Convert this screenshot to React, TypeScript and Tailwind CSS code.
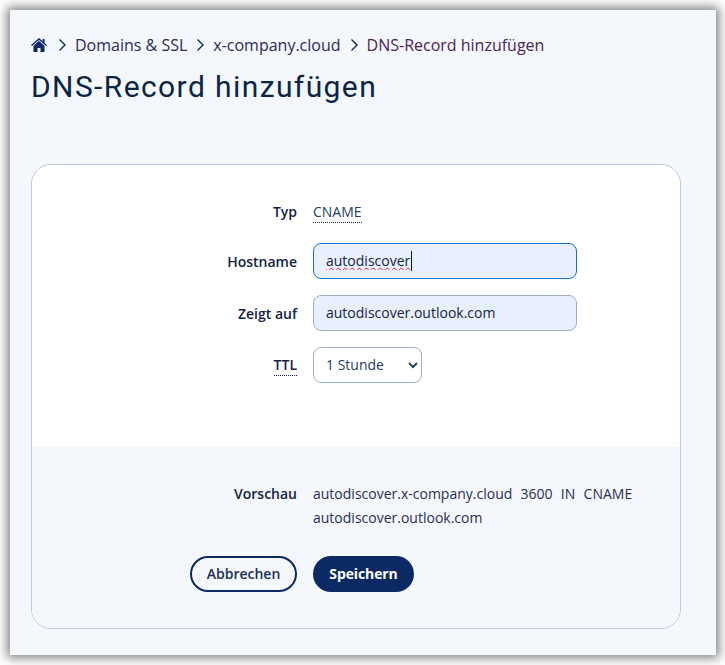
import React from 'react';

const Chevron = () => (
  <svg className="w-[9px] h-[14px] shrink-0" viewBox="0 0 9 14" fill="none" stroke="#0d2b5e" strokeWidth={1.4}>
    <path d="M1.5 1.5L7 7l-5.5 5.5" />
  </svg>
);

const HomeIcon = () => (
  <svg className="w-[16px] h-[14px] shrink-0" viewBox="0 0 16 14" fill="#0b2a63">
    <path d="M8 0L0 7l.9 1L8 1.9 15.1 8l.9-1-2.4-2.1V1h-2v2.2L8 0z" />
    <path d="M8 3L2.5 7.8V14h4v-4h3v4h4V7.8L8 3z" />
  </svg>
);

const Label = ({ children, dotted }: { children: React.ReactNode; dotted?: boolean }) => (
  <div className="flex justify-end">
    <span className={`text-[14px] font-semibold text-[#14233f] ${dotted ? 'border-b border-dotted border-[#14233f] leading-[20px]' : ''}`}>
      {children}
    </span>
  </div>
);

export default function App() {
  return (
    <div className="w-[725px] h-[665px] bg-white pt-[10px] pl-[10px] overflow-hidden font-['Open_Sans','Noto_Sans',sans-serif]">
      <div className="w-[706px] h-[645px] bg-[#f4f7fb] shadow-[0_0_10px_3px_rgba(0,0,0,0.5)] pl-[21px] pt-[25px]">
        {/* Breadcrumb */}
        <nav className="flex items-center h-[20px] text-[16px] text-[#2b2a5c]">
          <HomeIcon />
          <span className="ml-[11px]"><Chevron /></span>
          <span className="ml-[8px]">Domains &amp; SSL</span>
          <span className="ml-[9px]"><Chevron /></span>
          <span className="ml-[8px]">x-company.cloud</span>
          <span className="ml-[9px]"><Chevron /></span>
          <span className="ml-[8px] text-[#4a2552]">DNS-Record hinzufügen</span>
        </nav>

        <h1 className="mt-[14px] text-[30px] leading-[36px] font-normal tracking-[1.4px] text-[#0b2545] font-['Roboto',sans-serif]">
          DNS-Record hinzufügen
        </h1>

        {/* Card */}
        <div className="mt-[59px] w-[650px] h-[465px] rounded-[20px] border border-[#bccbd9] overflow-hidden flex flex-col">
          <div className="h-[282px] bg-white pt-[29px] grid grid-cols-[265px_264px] gap-x-[16px] content-start text-[14px] text-[#14233f]">
            <div className="pt-[7px] h-[36px]"><Label>Typ</Label></div>
            <div className="pt-[7px] h-[36px]">
              <span className="border-b border-dotted border-[#14233f] leading-[20px] text-[#27405f] inline-block">CNAME</span>
            </div>

            <div className="mt-[13px] h-[36px] flex items-center justify-end"><Label>Hostname</Label></div>
            <div className="mt-[13px] relative">
              <input
                readOnly
                defaultValue="autodiscover"
                spellCheck={false}
                className="w-[264px] h-[36px] rounded-[8px] border border-[#1273c4] bg-[#e8f0fd] pl-[12px] pr-[12px] pb-[1px] text-[14px] text-[#14233f] outline-none underline decoration-wavy decoration-[#f01d2c] decoration-1"
              />
              <span className="absolute left-[98px] top-[8px] w-px h-[20px] bg-[#111]" />
            </div>

            <div className="mt-[16px] h-[36px] flex items-center justify-end"><Label>Zeigt auf</Label></div>
            <div className="mt-[16px]">
              <input
                readOnly
                defaultValue="autodiscover.outlook.com"
                className="w-[264px] h-[36px] rounded-[8px] border border-[#9fadc4] bg-[#e8f0fd] pl-[12px] pr-[12px] pb-[1px] text-[14px] text-[#14233f] outline-none"
              />
            </div>

            <div className="mt-[16px] h-[36px] flex items-center justify-end"><Label dotted>TTL</Label></div>
            <div className="mt-[16px]">
              <select
                defaultValue="3600"
                className="w-[109px] h-[36px] rounded-[8px] border border-[#9fadc4] bg-white pl-[8px] pb-[1px] text-[14px] text-[#27405f] outline-none"
              >
                <option value="3600">1 Stunde</option>
              </select>
            </div>
          </div>

          <div className="flex-1 bg-[#f4f7fb] pt-[35px]">
            <div className="grid grid-cols-[265px_1fr] gap-x-[16px] text-[14px] leading-[24px]">
              <Label>Vorschau</Label>
              <div className="text-[#27304f] whitespace-pre [word-spacing:0.5px]">
                autodiscover.x-company.cloud  3600  IN  CNAME
                <br />
                autodiscover.outlook.com
              </div>
            </div>
            <div className="mt-[26px] ml-[158px] flex gap-[16px]">
              <button className="w-[107px] h-[36px] rounded-full border-2 border-[#0b2a63] pb-[1px] text-[14px] font-semibold text-[#1c2f55]">
                Abbrechen
              </button>
              <button className="w-[101px] h-[36px] rounded-full bg-[#0b2a63] pb-[2px] text-[14px] font-bold tracking-[-0.1px] text-white">
                Speichern
              </button>
            </div>
          </div>
        </div>
      </div>
    </div>
  );
}
